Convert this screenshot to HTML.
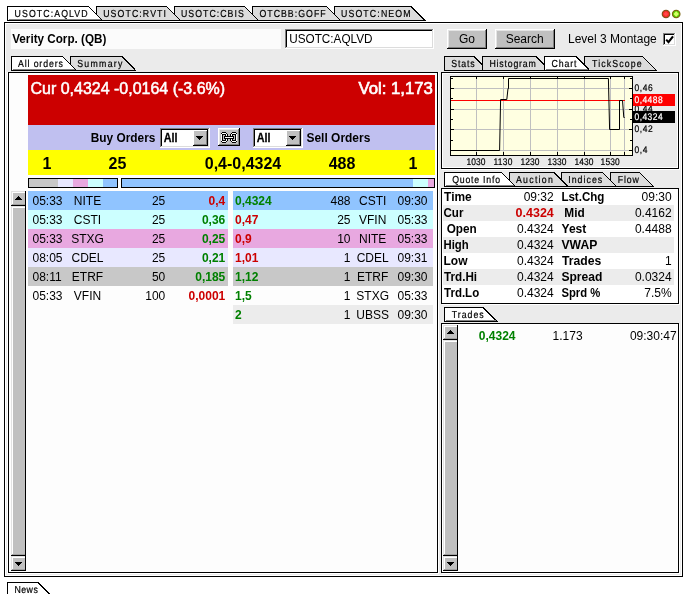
<!DOCTYPE html>
<html lang="en"><head><meta charset="utf-8"><title>Level 3 Montage - USOTC:AQLVD</title>
<style>html,body{margin:0;padding:0;background:#fff}body{width:690px;height:594px;overflow:hidden}svg{display:block;will-change:transform;font-family:"Liberation Sans",Arial,sans-serif}.c{shape-rendering:crispEdges}</style></head><body>
<svg width="690" height="594" viewBox="0 0 690 594">
<g class="c">
<rect x="0" y="0" width="690" height="594" fill="#fff"/>
<rect x="4" y="22" width="679" height="555" fill="#000"/>
<rect x="5" y="23" width="677" height="553" fill="#fff"/>
<rect x="6" y="24" width="675" height="551" fill="#ebebeb"/>
</g><g class="c" id="toptabs">
<polygon points="334.5,20.5 334.5,6.5 411.1,6.5 425.0,20.5" fill="#dcdcdc" stroke="#000" stroke-width="1"/>
<text transform="translate(341,17) scale(0.86,1)" font-size="10.2" text-rendering="geometricPrecision" textLength="80.9" lengthAdjust="spacing" stroke="#000" stroke-width="0.2">USOTC:NEOM</text>
<polygon points="252.5,20.5 252.5,6.5 326.7,6.5 340.6,20.5" fill="#dcdcdc" stroke="#000" stroke-width="1"/>
<text transform="translate(259.4,17) scale(0.86,1)" font-size="10.2" text-rendering="geometricPrecision" textLength="77.1" lengthAdjust="spacing" stroke="#000" stroke-width="0.2">OTCBB:GOFF</text>
<polygon points="174.5,20.5 174.5,6.5 244.4,6.5 258.3,20.5" fill="#dcdcdc" stroke="#000" stroke-width="1"/>
<text transform="translate(181,17) scale(0.86,1)" font-size="10.2" text-rendering="geometricPrecision" textLength="73.0" lengthAdjust="spacing" stroke="#000" stroke-width="0.2">USOTC:CBIS</text>
<polygon points="96.5,20.5 96.5,6.5 166.4,6.5 180.3,20.5" fill="#dcdcdc" stroke="#000" stroke-width="1"/>
<text transform="translate(103.2,17) scale(0.86,1)" font-size="10.2" text-rendering="geometricPrecision" textLength="73.0" lengthAdjust="spacing" stroke="#000" stroke-width="0.2">USOTC:RVTI</text>
<polygon points="7.5,20.5 7.5,6.5 88.4,6.5 102.3,20.5" fill="#fff" stroke="#000" stroke-width="1"/>
<rect x="9" y="19" width="91.8" height="1" fill="#808080"/>
<text transform="translate(14.6,17) scale(0.86,1)" font-size="10.2" text-rendering="geometricPrecision" textLength="84.9" lengthAdjust="spacing" stroke="#000" stroke-width="0.2">USOTC:AQLVD</text>
</g><g class="c">
</g><g>
<circle cx="666" cy="14" r="3.7" fill="#ff2828" stroke="#86501a" stroke-width="1.3"/>
<rect x="664.2" y="12.2" width="3.4" height="3.4" fill="#ff4a4a" transform="rotate(45 665.9 13.9)"/>
<circle cx="676.2" cy="14" r="3.7" fill="#56dc00" stroke="#7c6612" stroke-width="1.3"/>
<rect x="674.3" y="12.1" width="3.8" height="3.8" fill="#d6ff66" transform="rotate(45 676.2 14)"/>
</g><g class="c">
<rect x="11" y="29" width="270" height="20" fill="#fbfbfb"/>
<text x="12.2" y="43" font-size="12" font-weight="bold" textLength="94.2" lengthAdjust="spacingAndGlyphs">Verity Corp. (QB)</text>
<rect x="285" y="29" width="149" height="20" fill="#fff"/>
<rect x="285" y="29" width="148" height="1" fill="#808080"/>
<rect x="285" y="29" width="1" height="19" fill="#808080"/>
<rect x="286" y="30" width="146" height="1" fill="#000"/>
<rect x="286" y="30" width="1" height="17" fill="#000"/>
<rect x="286" y="47" width="147" height="1" fill="#dcdcdc"/>
<rect x="432" y="30" width="1" height="18" fill="#dcdcdc"/>
<rect x="285" y="48" width="149" height="1" fill="#fff"/>
<rect x="433" y="29" width="1" height="20" fill="#fff"/>
<text x="289.2" y="43" font-size="12" textLength="83.3" lengthAdjust="spacingAndGlyphs">USOTC:AQLVD</text>
<rect x="447" y="29" width="40" height="20" fill="#c0c0c0"/>
<rect x="447" y="29" width="39" height="2" fill="#e4e4e4"/>
<rect x="447" y="29" width="2" height="19" fill="#e4e4e4"/>
<rect x="447" y="29" width="39" height="1" fill="#fff"/>
<rect x="447" y="29" width="1" height="19" fill="#fff"/>
<rect x="448" y="47" width="38" height="1" fill="#808080"/>
<rect x="485" y="30" width="1" height="18" fill="#808080"/>
<rect x="447" y="48" width="40" height="1" fill="#000"/>
<rect x="486" y="29" width="1" height="20" fill="#000"/>
<text x="467" y="43" font-size="12" text-anchor="middle">Go</text>
<rect x="495" y="29" width="60" height="20" fill="#c0c0c0"/>
<rect x="495" y="29" width="59" height="2" fill="#e4e4e4"/>
<rect x="495" y="29" width="2" height="19" fill="#e4e4e4"/>
<rect x="495" y="29" width="59" height="1" fill="#fff"/>
<rect x="495" y="29" width="1" height="19" fill="#fff"/>
<rect x="496" y="47" width="58" height="1" fill="#808080"/>
<rect x="553" y="30" width="1" height="18" fill="#808080"/>
<rect x="495" y="48" width="60" height="1" fill="#000"/>
<rect x="554" y="29" width="1" height="20" fill="#000"/>
<text x="524.7" y="43" font-size="12" text-anchor="middle">Search</text>
<text x="568" y="43" font-size="12">Level 3 Montage</text>
<rect x="663" y="33" width="13" height="13" fill="#fff"/>
<rect x="663" y="33" width="12" height="1" fill="#808080"/>
<rect x="663" y="33" width="1" height="12" fill="#808080"/>
<rect x="664" y="34" width="10" height="1" fill="#000"/>
<rect x="664" y="34" width="1" height="10" fill="#000"/>
<rect x="664" y="44" width="11" height="1" fill="#dcdcdc"/>
<rect x="674" y="34" width="1" height="11" fill="#dcdcdc"/>
<rect x="663" y="45" width="13" height="1" fill="#fff"/>
<rect x="675" y="33" width="1" height="13" fill="#fff"/>
</g><g>
<polyline points="666.2,39.6 668.5,42.2 673,36.3" fill="none" stroke="#000" stroke-width="2.1"/>
</g><g class="c">
<polygon points="70.5,70.5 70.5,56.5 121.9,56.5 135.8,70.5" fill="#dcdcdc" stroke="#000" stroke-width="1"/>
<text transform="translate(77.2,67) scale(0.86,1)" font-size="10.2" text-rendering="geometricPrecision" textLength="52.6" lengthAdjust="spacing" stroke="#000" stroke-width="0.2">Summary</text>
<polygon points="11.5,70.5 11.5,56.5 62.7,56.5 76.6,70.5" fill="#fff" stroke="#000" stroke-width="1"/>
<rect x="13" y="69" width="62.099999999999994" height="1" fill="#808080"/>
<text transform="translate(18,67) scale(0.86,1)" font-size="10.2" text-rendering="geometricPrecision" textLength="52.1" lengthAdjust="spacing" stroke="#000" stroke-width="0.2">All orders</text>
<rect x="7" y="72" width="432" height="502" fill="#fff"/>
<rect x="8" y="72" width="430" height="501" fill="#000"/>
<rect x="9" y="73" width="428" height="499" fill="#fdfdfd"/>
<rect x="28" y="75" width="407" height="50" fill="#cc0000"/>
<text transform="translate(30.5,93.8) scale(1,1.05)" font-size="16" fill="#fff" stroke="#fff" stroke-width="0.5">Cur 0,4324 -0,0164 (-3.6%)</text>
<text transform="translate(358.4,93.8) scale(1,1.05)" font-size="16" fill="#fff" stroke="#fff" stroke-width="0.65" textLength="74.4" lengthAdjust="spacingAndGlyphs">Vol: 1,173</text>
<rect x="28" y="125" width="407" height="25" fill="#c0c0f0"/>
<text x="90.8" y="141.7" font-size="12" font-weight="bold" textLength="64.6" lengthAdjust="spacingAndGlyphs">Buy Orders</text>
<text x="306.5" y="141.7" font-size="12" font-weight="bold" textLength="63.8" lengthAdjust="spacingAndGlyphs">Sell Orders</text>
<rect x="160" y="128" width="50" height="20" fill="#fff"/>
<rect x="160" y="128" width="49" height="1" fill="#808080"/>
<rect x="160" y="128" width="1" height="19" fill="#808080"/>
<rect x="161" y="129" width="47" height="1" fill="#000"/>
<rect x="161" y="129" width="1" height="17" fill="#000"/>
<rect x="161" y="146" width="48" height="1" fill="#dcdcdc"/>
<rect x="208" y="129" width="1" height="18" fill="#dcdcdc"/>
<rect x="160" y="147" width="50" height="1" fill="#fff"/>
<rect x="209" y="128" width="1" height="20" fill="#fff"/>
<text x="163.7" y="141.7" font-size="12" font-weight="bold" textLength="13.8" lengthAdjust="spacingAndGlyphs" stroke="#000" stroke-width="0.3">All</text>
<rect x="193" y="130" width="15" height="16" fill="#c0c0c0"/>
<rect x="193" y="130" width="14" height="1" fill="#fff"/>
<rect x="193" y="130" width="1" height="15" fill="#fff"/>
<rect x="194" y="144" width="13" height="1" fill="#808080"/>
<rect x="206" y="131" width="1" height="14" fill="#808080"/>
<rect x="193" y="145" width="15" height="1" fill="#000"/>
<rect x="207" y="130" width="1" height="16" fill="#000"/>
<rect x="196" y="136" width="7" height="1" fill="#000"/>
<rect x="197" y="137" width="5" height="1" fill="#000"/>
<rect x="198" y="138" width="3" height="1" fill="#000"/>
<rect x="199" y="139" width="1" height="1" fill="#000"/>
<rect x="253" y="128" width="50" height="20" fill="#fff"/>
<rect x="253" y="128" width="49" height="1" fill="#808080"/>
<rect x="253" y="128" width="1" height="19" fill="#808080"/>
<rect x="254" y="129" width="47" height="1" fill="#000"/>
<rect x="254" y="129" width="1" height="17" fill="#000"/>
<rect x="254" y="146" width="48" height="1" fill="#dcdcdc"/>
<rect x="301" y="129" width="1" height="18" fill="#dcdcdc"/>
<rect x="253" y="147" width="50" height="1" fill="#fff"/>
<rect x="302" y="128" width="1" height="20" fill="#fff"/>
<text x="256.7" y="141.7" font-size="12" font-weight="bold" textLength="13.8" lengthAdjust="spacingAndGlyphs" stroke="#000" stroke-width="0.3">All</text>
<rect x="286" y="130" width="15" height="16" fill="#c0c0c0"/>
<rect x="286" y="130" width="14" height="1" fill="#fff"/>
<rect x="286" y="130" width="1" height="15" fill="#fff"/>
<rect x="287" y="144" width="13" height="1" fill="#808080"/>
<rect x="299" y="131" width="1" height="14" fill="#808080"/>
<rect x="286" y="145" width="15" height="1" fill="#000"/>
<rect x="300" y="130" width="1" height="16" fill="#000"/>
<rect x="289" y="136" width="7" height="1" fill="#000"/>
<rect x="290" y="137" width="5" height="1" fill="#000"/>
<rect x="291" y="138" width="3" height="1" fill="#000"/>
<rect x="292" y="139" width="1" height="1" fill="#000"/>
<rect x="218" y="128" width="22" height="18" fill="#c0c0c0"/>
<rect x="218" y="128" width="21" height="2" fill="#e4e4e4"/>
<rect x="218" y="128" width="2" height="17" fill="#e4e4e4"/>
<rect x="218" y="128" width="21" height="1" fill="#fff"/>
<rect x="218" y="128" width="1" height="17" fill="#fff"/>
<rect x="219" y="144" width="20" height="1" fill="#808080"/>
<rect x="238" y="129" width="1" height="16" fill="#808080"/>
<rect x="218" y="145" width="22" height="1" fill="#000"/>
<rect x="239" y="128" width="1" height="18" fill="#000"/>
<g id="chain">
<rect x="222" y="132" width="4" height="1" fill="#000"/>
<rect x="232" y="132" width="4" height="1" fill="#000"/>
<rect x="221" y="133" width="1" height="1" fill="#000"/>
<rect x="222" y="133" width="4" height="1" fill="#fff"/>
<rect x="226" y="133" width="1" height="1" fill="#000"/>
<rect x="231" y="133" width="1" height="1" fill="#000"/>
<rect x="232" y="133" width="4" height="1" fill="#fff"/>
<rect x="236" y="133" width="1" height="1" fill="#000"/>
<rect x="221" y="134" width="1" height="1" fill="#fff"/>
<rect x="222" y="134" width="4" height="1" fill="#000"/>
<rect x="226" y="134" width="1" height="1" fill="#fff"/>
<rect x="227" y="134" width="1" height="1" fill="#000"/>
<rect x="230" y="134" width="1" height="1" fill="#000"/>
<rect x="231" y="134" width="1" height="1" fill="#fff"/>
<rect x="232" y="134" width="4" height="1" fill="#000"/>
<rect x="236" y="134" width="1" height="1" fill="#fff"/>
<rect x="221" y="135" width="1" height="1" fill="#fff"/>
<rect x="222" y="135" width="1" height="1" fill="#000"/>
<rect x="225" y="135" width="1" height="1" fill="#000"/>
<rect x="226" y="135" width="1" height="1" fill="#fff"/>
<rect x="227" y="135" width="1" height="1" fill="#000"/>
<rect x="230" y="135" width="1" height="1" fill="#000"/>
<rect x="231" y="135" width="1" height="1" fill="#fff"/>
<rect x="232" y="135" width="1" height="1" fill="#000"/>
<rect x="235" y="135" width="1" height="1" fill="#000"/>
<rect x="236" y="135" width="1" height="1" fill="#fff"/>
<rect x="221" y="136" width="1" height="1" fill="#fff"/>
<rect x="222" y="136" width="1" height="1" fill="#000"/>
<rect x="224" y="136" width="10" height="1" fill="#000"/>
<rect x="235" y="136" width="1" height="1" fill="#000"/>
<rect x="236" y="136" width="1" height="1" fill="#fff"/>
<rect x="221" y="137" width="1" height="1" fill="#fff"/>
<rect x="222" y="137" width="1" height="1" fill="#000"/>
<rect x="224" y="137" width="1" height="1" fill="#000"/>
<rect x="225" y="137" width="8" height="1" fill="#fff"/>
<rect x="233" y="137" width="1" height="1" fill="#000"/>
<rect x="235" y="137" width="1" height="1" fill="#000"/>
<rect x="236" y="137" width="1" height="1" fill="#fff"/>
<rect x="221" y="138" width="1" height="1" fill="#fff"/>
<rect x="222" y="138" width="1" height="1" fill="#000"/>
<rect x="224" y="138" width="10" height="1" fill="#000"/>
<rect x="235" y="138" width="1" height="1" fill="#000"/>
<rect x="236" y="138" width="1" height="1" fill="#fff"/>
<rect x="221" y="139" width="1" height="1" fill="#fff"/>
<rect x="222" y="139" width="1" height="1" fill="#000"/>
<rect x="225" y="139" width="1" height="1" fill="#000"/>
<rect x="226" y="139" width="1" height="1" fill="#fff"/>
<rect x="227" y="139" width="1" height="1" fill="#000"/>
<rect x="230" y="139" width="1" height="1" fill="#000"/>
<rect x="231" y="139" width="1" height="1" fill="#fff"/>
<rect x="232" y="139" width="1" height="1" fill="#000"/>
<rect x="235" y="139" width="1" height="1" fill="#000"/>
<rect x="236" y="139" width="1" height="1" fill="#fff"/>
<rect x="221" y="140" width="1" height="1" fill="#fff"/>
<rect x="222" y="140" width="4" height="1" fill="#000"/>
<rect x="226" y="140" width="1" height="1" fill="#fff"/>
<rect x="227" y="140" width="1" height="1" fill="#000"/>
<rect x="230" y="140" width="1" height="1" fill="#000"/>
<rect x="231" y="140" width="1" height="1" fill="#fff"/>
<rect x="232" y="140" width="4" height="1" fill="#000"/>
<rect x="236" y="140" width="1" height="1" fill="#fff"/>
<rect x="221" y="141" width="1" height="1" fill="#000"/>
<rect x="222" y="141" width="4" height="1" fill="#fff"/>
<rect x="226" y="141" width="1" height="1" fill="#000"/>
<rect x="231" y="141" width="1" height="1" fill="#000"/>
<rect x="232" y="141" width="4" height="1" fill="#fff"/>
<rect x="236" y="141" width="1" height="1" fill="#000"/>
<rect x="222" y="142" width="4" height="1" fill="#000"/>
<rect x="232" y="142" width="4" height="1" fill="#000"/>
</g>
<rect x="28" y="150" width="407" height="25" fill="#ffff00"/>
<text x="47" y="168.6" font-size="16" font-weight="bold" text-anchor="middle">1</text>
<text x="117.5" y="168.6" font-size="16" font-weight="bold" text-anchor="middle">25</text>
<text x="243" y="168.6" font-size="16" font-weight="bold" text-anchor="middle">0,4-0,4324</text>
<text x="342" y="168.6" font-size="16" font-weight="bold" text-anchor="middle">488</text>
<text x="413" y="168.6" font-size="16" font-weight="bold" text-anchor="middle">1</text>
<rect x="28" y="178" width="90" height="10" fill="#000"/>
<rect x="29" y="179" width="29" height="8" fill="#c8c8c8"/>
<rect x="58" y="179" width="15" height="8" fill="#e8e8ff"/>
<rect x="73" y="179" width="15" height="8" fill="#e8a8e0"/>
<rect x="88" y="179" width="15" height="8" fill="#ccffff"/>
<rect x="103" y="179" width="14" height="8" fill="#90c4ff"/>
<rect x="121" y="178" width="314" height="10" fill="#000"/>
<rect x="122" y="179" width="291" height="8" fill="#90c4ff"/>
<rect x="413" y="179" width="15" height="8" fill="#ccffff"/>
<rect x="428" y="179" width="6" height="8" fill="#e8a8e0"/>
<rect x="11" y="191" width="15" height="15" fill="#c0c0c0"/>
<rect x="11" y="191" width="14" height="2" fill="#fff"/>
<rect x="11" y="191" width="2" height="14" fill="#fff"/>
<rect x="11" y="191" width="14" height="1" fill="#e2e2e2"/>
<rect x="11" y="191" width="1" height="14" fill="#e2e2e2"/>
<rect x="12" y="204" width="13" height="1" fill="#a0a0a0"/>
<rect x="25" y="191" width="1" height="15" fill="#000"/>
<rect x="11" y="205" width="15" height="1" fill="#000"/>
<rect x="18" y="196" width="1" height="1" fill="#000"/>
<rect x="17" y="197" width="3" height="1" fill="#000"/>
<rect x="16" y="198" width="5" height="1" fill="#000"/>
<rect x="15" y="199" width="7" height="1" fill="#000"/>
<rect x="11" y="206" width="15" height="350" fill="#c0c0c0"/>
<rect x="11" y="206" width="14" height="2" fill="#fff"/>
<rect x="11" y="206" width="2" height="349" fill="#fff"/>
<rect x="11" y="206" width="14" height="1" fill="#e2e2e2"/>
<rect x="11" y="206" width="1" height="349" fill="#e2e2e2"/>
<rect x="12" y="554" width="13" height="1" fill="#a0a0a0"/>
<rect x="25" y="206" width="1" height="350" fill="#000"/>
<rect x="11" y="555" width="15" height="1" fill="#000"/>
<rect x="11" y="556" width="15" height="15" fill="#c0c0c0"/>
<rect x="11" y="556" width="14" height="2" fill="#fff"/>
<rect x="11" y="556" width="2" height="14" fill="#fff"/>
<rect x="11" y="556" width="14" height="1" fill="#e2e2e2"/>
<rect x="11" y="556" width="1" height="14" fill="#e2e2e2"/>
<rect x="12" y="569" width="13" height="1" fill="#a0a0a0"/>
<rect x="25" y="556" width="1" height="15" fill="#000"/>
<rect x="11" y="570" width="15" height="1" fill="#000"/>
<rect x="15" y="562" width="7" height="1" fill="#000"/>
<rect x="16" y="563" width="5" height="1" fill="#000"/>
<rect x="17" y="564" width="3" height="1" fill="#000"/>
<rect x="18" y="565" width="1" height="1" fill="#000"/>
<rect x="28" y="191" width="200" height="19" fill="#90c4ff"/>
<text x="32.5" y="204.7" font-size="12">05:33</text>
<text x="87.5" y="204.7" font-size="12" text-anchor="middle">NITE</text>
<text x="165.3" y="204.7" font-size="12" text-anchor="end">25</text>
<text x="225.3" y="204.7" font-size="12" font-weight="bold" fill="#cc0000" text-anchor="end">0,4</text>
<rect x="28" y="210" width="200" height="19" fill="#ccffff"/>
<text x="32.5" y="223.7" font-size="12">05:33</text>
<text x="87.5" y="223.7" font-size="12" text-anchor="middle">CSTI</text>
<text x="165.3" y="223.7" font-size="12" text-anchor="end">25</text>
<text x="225.3" y="223.7" font-size="12" font-weight="bold" fill="#008000" text-anchor="end">0,36</text>
<rect x="28" y="229" width="200" height="19" fill="#e8a8e0"/>
<text x="32.5" y="242.7" font-size="12">05:33</text>
<text x="87.5" y="242.7" font-size="12" text-anchor="middle">STXG</text>
<text x="165.3" y="242.7" font-size="12" text-anchor="end">25</text>
<text x="225.3" y="242.7" font-size="12" font-weight="bold" fill="#008000" text-anchor="end">0,25</text>
<rect x="28" y="248" width="200" height="19" fill="#e8e8ff"/>
<text x="32.5" y="261.7" font-size="12">08:05</text>
<text x="87.5" y="261.7" font-size="12" text-anchor="middle">CDEL</text>
<text x="165.3" y="261.7" font-size="12" text-anchor="end">25</text>
<text x="225.3" y="261.7" font-size="12" font-weight="bold" fill="#008000" text-anchor="end">0,21</text>
<rect x="28" y="267" width="200" height="19" fill="#c8c8c8"/>
<text x="32.5" y="280.7" font-size="12">08:11</text>
<text x="87.5" y="280.7" font-size="12" text-anchor="middle">ETRF</text>
<text x="165.3" y="280.7" font-size="12" text-anchor="end">50</text>
<text x="225.3" y="280.7" font-size="12" font-weight="bold" fill="#008000" text-anchor="end">0,185</text>
<rect x="28" y="286" width="200" height="19" fill="#fdfdfd"/>
<text x="32.5" y="299.7" font-size="12">05:33</text>
<text x="87.5" y="299.7" font-size="12" text-anchor="middle">VFIN</text>
<text x="165.3" y="299.7" font-size="12" text-anchor="end">100</text>
<text x="225.3" y="299.7" font-size="12" font-weight="bold" fill="#cc0000" text-anchor="end">0,0001</text>
<rect x="233" y="191" width="200" height="19" fill="#90c4ff"/>
<text x="235" y="204.7" font-size="12" font-weight="bold" fill="#008000">0,4324</text>
<text x="350.5" y="204.7" font-size="12" text-anchor="end">488</text>
<text x="372.7" y="204.7" font-size="12" text-anchor="middle">CSTI</text>
<text x="397.5" y="204.7" font-size="12">09:30</text>
<rect x="233" y="210" width="200" height="19" fill="#ccffff"/>
<text x="235" y="223.7" font-size="12" font-weight="bold" fill="#cc0000">0,47</text>
<text x="350.5" y="223.7" font-size="12" text-anchor="end">25</text>
<text x="372.7" y="223.7" font-size="12" text-anchor="middle">VFIN</text>
<text x="397.5" y="223.7" font-size="12">05:33</text>
<rect x="233" y="229" width="200" height="19" fill="#e8a8e0"/>
<text x="235" y="242.7" font-size="12" font-weight="bold" fill="#cc0000">0,9</text>
<text x="350.5" y="242.7" font-size="12" text-anchor="end">10</text>
<text x="372.7" y="242.7" font-size="12" text-anchor="middle">NITE</text>
<text x="397.5" y="242.7" font-size="12">05:33</text>
<rect x="233" y="248" width="200" height="19" fill="#e8e8ff"/>
<text x="235" y="261.7" font-size="12" font-weight="bold" fill="#cc0000">1,01</text>
<text x="350.5" y="261.7" font-size="12" text-anchor="end">1</text>
<text x="372.7" y="261.7" font-size="12" text-anchor="middle">CDEL</text>
<text x="397.5" y="261.7" font-size="12">09:31</text>
<rect x="233" y="267" width="200" height="19" fill="#c8c8c8"/>
<text x="235" y="280.7" font-size="12" font-weight="bold" fill="#008000">1,12</text>
<text x="350.5" y="280.7" font-size="12" text-anchor="end">1</text>
<text x="372.7" y="280.7" font-size="12" text-anchor="middle">ETRF</text>
<text x="397.5" y="280.7" font-size="12">09:30</text>
<rect x="233" y="286" width="200" height="19" fill="#fdfdfd"/>
<text x="235" y="299.7" font-size="12" font-weight="bold" fill="#008000">1,5</text>
<text x="350.5" y="299.7" font-size="12" text-anchor="end">1</text>
<text x="372.7" y="299.7" font-size="12" text-anchor="middle">STXG</text>
<text x="397.5" y="299.7" font-size="12">05:33</text>
<rect x="233" y="305" width="200" height="19" fill="#ececec"/>
<text x="235" y="318.7" font-size="12" font-weight="bold" fill="#008000">2</text>
<text x="350.5" y="318.7" font-size="12" text-anchor="end">1</text>
<text x="372.7" y="318.7" font-size="12" text-anchor="middle">UBSS</text>
<text x="397.5" y="318.7" font-size="12">09:30</text>
<polygon points="444.5,70.5 444.5,56.5 474.2,56.5 488.1,70.5" fill="#dcdcdc" stroke="#000" stroke-width="1"/>
<text transform="translate(451.3,67) scale(0.86,1)" font-size="10.2" text-rendering="geometricPrecision" textLength="27.2" lengthAdjust="spacing" stroke="#000" stroke-width="0.2">Stats</text>
<polygon points="482.5,70.5 482.5,56.5 536.1,56.5 550.0,70.5" fill="#dcdcdc" stroke="#000" stroke-width="1"/>
<text transform="translate(489.4,67) scale(0.86,1)" font-size="10.2" text-rendering="geometricPrecision" textLength="54.0" lengthAdjust="spacing" stroke="#000" stroke-width="0.2">Histogram</text>
<polygon points="584.5,70.5 584.5,56.5 642.4,56.5 656.3,70.5" fill="#dcdcdc" stroke="#000" stroke-width="1"/>
<text transform="translate(592,67) scale(0.86,1)" font-size="10.2" text-rendering="geometricPrecision" textLength="57.7" lengthAdjust="spacing" stroke="#000" stroke-width="0.2">TickScope</text>
<polygon points="544.5,70.5 544.5,56.5 575.9,56.5 589.8,70.5" fill="#fff" stroke="#000" stroke-width="1"/>
<rect x="546" y="69" width="42.299999999999955" height="1" fill="#808080"/>
<text transform="translate(551.5,67) scale(0.86,1)" font-size="10.2" text-rendering="geometricPrecision" textLength="29.1" lengthAdjust="spacing" stroke="#000" stroke-width="0.2">Chart</text>
<rect x="442" y="73" width="238" height="97" fill="#fff"/>
<rect x="441" y="72" width="238" height="97" fill="#000"/>
<rect x="442" y="73" width="236" height="95" fill="#fff"/>
<rect x="443" y="74" width="234" height="93" fill="#ebebeb"/>
<rect x="450" y="76" width="183" height="80" fill="#000"/>
<rect x="451" y="77" width="181" height="78" fill="#ffffe1"/>
<rect x="476" y="77" width="1" height="78" fill="#c0c0c0"/>
<rect x="503" y="77" width="1" height="78" fill="#c0c0c0"/>
<rect x="530" y="77" width="1" height="78" fill="#c0c0c0"/>
<rect x="557" y="77" width="1" height="78" fill="#c0c0c0"/>
<rect x="584" y="77" width="1" height="78" fill="#c0c0c0"/>
<rect x="610" y="77" width="1" height="78" fill="#c0c0c0"/>
<rect x="624" y="77" width="1" height="78" fill="#c0c0c0"/>
<rect x="451" y="88" width="181" height="1" fill="#c0c0c0"/>
<rect x="451" y="109" width="181" height="1" fill="#c0c0c0"/>
<rect x="451" y="129" width="181" height="1" fill="#c0c0c0"/>
<rect x="451" y="150" width="181" height="1" fill="#c0c0c0"/>
<rect x="451" y="88" width="3" height="1" fill="#000"/>
<rect x="629" y="88" width="3" height="1" fill="#000"/>
<rect x="451" y="109" width="3" height="1" fill="#000"/>
<rect x="629" y="109" width="3" height="1" fill="#000"/>
<rect x="451" y="129" width="3" height="1" fill="#000"/>
<rect x="629" y="129" width="3" height="1" fill="#000"/>
<rect x="451" y="150" width="3" height="1" fill="#000"/>
<rect x="629" y="150" width="3" height="1" fill="#000"/>
<rect x="451" y="78" width="2" height="1" fill="#000"/>
<rect x="630" y="78" width="2" height="1" fill="#000"/>
<rect x="451" y="98" width="2" height="1" fill="#000"/>
<rect x="630" y="98" width="2" height="1" fill="#000"/>
<rect x="451" y="119" width="2" height="1" fill="#000"/>
<rect x="630" y="119" width="2" height="1" fill="#000"/>
<rect x="451" y="140" width="2" height="1" fill="#000"/>
<rect x="630" y="140" width="2" height="1" fill="#000"/>
<rect x="476" y="152" width="1" height="3" fill="#000"/>
<rect x="476" y="77" width="1" height="2" fill="#000"/>
<rect x="503" y="152" width="1" height="3" fill="#000"/>
<rect x="503" y="77" width="1" height="2" fill="#000"/>
<rect x="530" y="152" width="1" height="3" fill="#000"/>
<rect x="530" y="77" width="1" height="2" fill="#000"/>
<rect x="557" y="152" width="1" height="3" fill="#000"/>
<rect x="557" y="77" width="1" height="2" fill="#000"/>
<rect x="584" y="152" width="1" height="3" fill="#000"/>
<rect x="584" y="77" width="1" height="2" fill="#000"/>
<rect x="610" y="152" width="1" height="3" fill="#000"/>
<rect x="610" y="77" width="1" height="2" fill="#000"/>
<rect x="624" y="152" width="1" height="3" fill="#000"/>
<rect x="624" y="77" width="1" height="2" fill="#000"/>
</g><g>
<line x1="451" y1="100.5" x2="625" y2="100.5" stroke="#ff0000" stroke-width="1.2"/>
<polyline fill="none" stroke="#000" stroke-width="1" points="450.5,150.5 499.6,150.5 500.6,99.5 506.8,99.5 508,88.5 508.5,88.5 508.5,78.5 608.4,78.5 609.6,129.5 619.5,129.5 619.5,100.5 622.5,100.5 623.8,117.5 624.6,117.5"/>
</g><g class="c">
<text transform="translate(466.40000000000003,165) scale(0.88,1)" font-size="9.6" text-rendering="geometricPrecision" textLength="21.7" lengthAdjust="spacing" stroke="#000" stroke-width="0.2">1030</text>
<text transform="translate(493.40000000000003,165) scale(0.88,1)" font-size="9.6" text-rendering="geometricPrecision" textLength="21.7" lengthAdjust="spacing" stroke="#000" stroke-width="0.2">1130</text>
<text transform="translate(520.4,165) scale(0.88,1)" font-size="9.6" text-rendering="geometricPrecision" textLength="21.7" lengthAdjust="spacing" stroke="#000" stroke-width="0.2">1230</text>
<text transform="translate(547.4,165) scale(0.88,1)" font-size="9.6" text-rendering="geometricPrecision" textLength="21.7" lengthAdjust="spacing" stroke="#000" stroke-width="0.2">1330</text>
<text transform="translate(574.4,165) scale(0.88,1)" font-size="9.6" text-rendering="geometricPrecision" textLength="21.7" lengthAdjust="spacing" stroke="#000" stroke-width="0.2">1430</text>
<text transform="translate(600.6,165) scale(0.88,1)" font-size="9.6" text-rendering="geometricPrecision" textLength="21.7" lengthAdjust="spacing" stroke="#000" stroke-width="0.2">1530</text>
<text transform="translate(634.6,90.8) scale(0.88,1)" font-size="9.6" text-rendering="geometricPrecision" textLength="20.5" lengthAdjust="spacing" stroke="#000" stroke-width="0.2">0,46</text>
<text transform="translate(634.6,111.5) scale(0.88,1)" font-size="9.6" text-rendering="geometricPrecision" textLength="20.5" lengthAdjust="spacing" stroke="#000" stroke-width="0.2">0,44</text>
<text transform="translate(634.6,132) scale(0.88,1)" font-size="9.6" text-rendering="geometricPrecision" textLength="20.5" lengthAdjust="spacing" stroke="#000" stroke-width="0.2">0,42</text>
<text transform="translate(634.6,152.8) scale(0.88,1)" font-size="9.6" text-rendering="geometricPrecision" textLength="14.5" lengthAdjust="spacing" stroke="#000" stroke-width="0.2">0,4</text>
<rect x="633" y="94" width="42" height="12" fill="#ff0000"/>
<text transform="translate(634.6,102.9) scale(0.88,1)" font-size="9.6" text-rendering="geometricPrecision" textLength="31.8" lengthAdjust="spacing" stroke="#fff" stroke-width="0.2" fill="#fff">0,4488</text>
<rect x="633" y="111" width="42" height="12" fill="#000"/>
<text transform="translate(634.6,120.1) scale(0.88,1)" font-size="9.6" text-rendering="geometricPrecision" textLength="31.8" lengthAdjust="spacing" stroke="#fff" stroke-width="0.2" fill="#fff">0,4324</text>
<polygon points="610.5,186.5 610.5,172.5 639.8,172.5 653.6999999999999,186.5" fill="#dcdcdc" stroke="#000" stroke-width="1"/>
<text transform="translate(617.8,183) scale(0.86,1)" font-size="10.2" text-rendering="geometricPrecision" textLength="24.5" lengthAdjust="spacing" stroke="#000" stroke-width="0.2">Flow</text>
<polygon points="561.5,186.5 561.5,172.5 602.8,172.5 616.6999999999999,186.5" fill="#dcdcdc" stroke="#000" stroke-width="1"/>
<text transform="translate(568.2,183) scale(0.86,1)" font-size="10.2" text-rendering="geometricPrecision" textLength="39.5" lengthAdjust="spacing" stroke="#000" stroke-width="0.2">Indices</text>
<polygon points="509.5,186.5 509.5,172.5 554.0,172.5 567.9,186.5" fill="#dcdcdc" stroke="#000" stroke-width="1"/>
<text transform="translate(516,183) scale(0.86,1)" font-size="10.2" text-rendering="geometricPrecision" textLength="42.8" lengthAdjust="spacing" stroke="#000" stroke-width="0.2">Auction</text>
<polygon points="444.5,186.5 444.5,172.5 501.4,172.5 515.3,186.5" fill="#fff" stroke="#000" stroke-width="1"/>
<rect x="446" y="185" width="67.79999999999995" height="1" fill="#808080"/>
<text transform="translate(452.2,183) scale(0.86,1)" font-size="10.2" text-rendering="geometricPrecision" textLength="55.6" lengthAdjust="spacing" stroke="#000" stroke-width="0.2">Quote Info</text>
<rect x="442" y="189" width="238" height="116" fill="#fff"/>
<rect x="441" y="188" width="238" height="116" fill="#000"/>
<rect x="442" y="189" width="236" height="114" fill="#fff"/>
<rect x="443" y="190" width="234" height="112" fill="#fff"/>
<text x="444.1" y="200.6" font-size="12" font-weight="bold" textLength="27.6" lengthAdjust="spacingAndGlyphs">Time</text>
<text x="553.7" y="200.6" font-size="12" text-anchor="end">09:32</text>
<text x="561.4" y="200.6" font-size="12" font-weight="bold" textLength="43" lengthAdjust="spacingAndGlyphs">Lst.Chg</text>
<text x="671.6" y="200.6" font-size="12" text-anchor="end">09:30</text>
<rect x="443" y="205" width="231" height="16" fill="#ececec"/>
<text x="443.5" y="216.6" font-size="12" font-weight="bold" textLength="19.9" lengthAdjust="spacingAndGlyphs">Cur</text>
<text x="515.6" y="216.6" font-size="12" font-weight="bold" fill="#cc0000" textLength="38.2" lengthAdjust="spacingAndGlyphs">0.4324</text>
<text x="564.3" y="216.6" font-size="12" font-weight="bold" textLength="20.4" lengthAdjust="spacingAndGlyphs">Mid</text>
<text x="671.6" y="216.6" font-size="12" text-anchor="end">0.4162</text>
<text x="446.7" y="232.6" font-size="12" font-weight="bold" textLength="30" lengthAdjust="spacingAndGlyphs">Open</text>
<text x="553.7" y="232.6" font-size="12" text-anchor="end">0.4324</text>
<text x="561.5" y="232.6" font-size="12" font-weight="bold" textLength="24.8" lengthAdjust="spacingAndGlyphs">Yest</text>
<text x="671.6" y="232.6" font-size="12" text-anchor="end">0.4488</text>
<rect x="443" y="237" width="231" height="16" fill="#ececec"/>
<text x="443.5" y="248.6" font-size="12" font-weight="bold" textLength="25.2" lengthAdjust="spacingAndGlyphs">High</text>
<text x="553.7" y="248.6" font-size="12" text-anchor="end">0.4324</text>
<text x="561.5" y="248.6" font-size="12" font-weight="bold" textLength="35.8" lengthAdjust="spacingAndGlyphs">VWAP</text>
<text x="443.5" y="264.6" font-size="12" font-weight="bold" textLength="24" lengthAdjust="spacingAndGlyphs">Low</text>
<text x="553.7" y="264.6" font-size="12" text-anchor="end">0.4324</text>
<text x="562.1" y="264.6" font-size="12" font-weight="bold" textLength="39.2" lengthAdjust="spacingAndGlyphs">Trades</text>
<text x="671.6" y="264.6" font-size="12" text-anchor="end">1</text>
<rect x="443" y="269" width="231" height="16" fill="#ececec"/>
<text x="444" y="280.6" font-size="12" font-weight="bold" textLength="33.1" lengthAdjust="spacingAndGlyphs">Trd.Hi</text>
<text x="553.7" y="280.6" font-size="12" text-anchor="end">0.4324</text>
<text x="561.4" y="280.6" font-size="12" font-weight="bold" textLength="41" lengthAdjust="spacingAndGlyphs">Spread</text>
<text x="671.6" y="280.6" font-size="12" text-anchor="end">0.0324</text>
<text x="444" y="296.6" font-size="12" font-weight="bold" textLength="35.2" lengthAdjust="spacingAndGlyphs">Trd.Lo</text>
<text x="553.7" y="296.6" font-size="12" text-anchor="end">0.4324</text>
<text x="561.4" y="296.6" font-size="12" font-weight="bold" textLength="38.8" lengthAdjust="spacingAndGlyphs">Sprd %</text>
<text x="671.6" y="296.6" font-size="12" text-anchor="end">7.5%</text>
<polygon points="444.5,321.5 444.5,307.5 483.2,307.5 497.1,321.5" fill="#fff" stroke="#000" stroke-width="1"/>
<rect x="446" y="320" width="49.60000000000002" height="1" fill="#808080"/>
<text transform="translate(451.8,318) scale(0.86,1)" font-size="10.2" text-rendering="geometricPrecision" textLength="37.0" lengthAdjust="spacing" stroke="#000" stroke-width="0.2">Trades</text>
<rect x="442" y="324" width="238" height="250" fill="#fff"/>
<rect x="441" y="323" width="238" height="250" fill="#000"/>
<rect x="442" y="324" width="236" height="248" fill="#fff"/>
<rect x="443" y="325" width="234" height="246" fill="#fdfdfd"/>
<rect x="443" y="325" width="15" height="15" fill="#c0c0c0"/>
<rect x="443" y="325" width="14" height="2" fill="#fff"/>
<rect x="443" y="325" width="2" height="14" fill="#fff"/>
<rect x="443" y="325" width="14" height="1" fill="#e2e2e2"/>
<rect x="443" y="325" width="1" height="14" fill="#e2e2e2"/>
<rect x="444" y="338" width="13" height="1" fill="#a0a0a0"/>
<rect x="457" y="325" width="1" height="15" fill="#000"/>
<rect x="443" y="339" width="15" height="1" fill="#000"/>
<rect x="450" y="330" width="1" height="1" fill="#000"/>
<rect x="449" y="331" width="3" height="1" fill="#000"/>
<rect x="448" y="332" width="5" height="1" fill="#000"/>
<rect x="447" y="333" width="7" height="1" fill="#000"/>
<rect x="443" y="340" width="15" height="216" fill="#c0c0c0"/>
<rect x="443" y="340" width="14" height="2" fill="#fff"/>
<rect x="443" y="340" width="2" height="215" fill="#fff"/>
<rect x="443" y="340" width="14" height="1" fill="#e2e2e2"/>
<rect x="443" y="340" width="1" height="215" fill="#e2e2e2"/>
<rect x="444" y="554" width="13" height="1" fill="#a0a0a0"/>
<rect x="457" y="340" width="1" height="216" fill="#000"/>
<rect x="443" y="555" width="15" height="1" fill="#000"/>
<rect x="443" y="556" width="15" height="15" fill="#c0c0c0"/>
<rect x="443" y="556" width="14" height="2" fill="#fff"/>
<rect x="443" y="556" width="2" height="14" fill="#fff"/>
<rect x="443" y="556" width="14" height="1" fill="#e2e2e2"/>
<rect x="443" y="556" width="1" height="14" fill="#e2e2e2"/>
<rect x="444" y="569" width="13" height="1" fill="#a0a0a0"/>
<rect x="457" y="556" width="1" height="15" fill="#000"/>
<rect x="443" y="570" width="15" height="1" fill="#000"/>
<rect x="447" y="562" width="7" height="1" fill="#000"/>
<rect x="448" y="563" width="5" height="1" fill="#000"/>
<rect x="449" y="564" width="3" height="1" fill="#000"/>
<rect x="450" y="565" width="1" height="1" fill="#000"/>
<text x="478.8" y="340" font-size="12" font-weight="bold" fill="#008000">0,4324</text>
<text x="552.6" y="340" font-size="12">1.173</text>
<text x="676.6" y="340" font-size="12" text-anchor="end">09:30:47</text>
<polygon points="7.5,596.5 7.5,582.5 38.1,582.5 52.0,596.5" fill="#fff" stroke="#000" stroke-width="1"/>
<rect x="9" y="595" width="41.5" height="1" fill="#808080"/>
<text transform="translate(14.4,593) scale(0.86,1)" font-size="10.2" text-rendering="geometricPrecision" textLength="27.2" lengthAdjust="spacing" stroke="#000" stroke-width="0.2">News</text>
</g></svg></body></html>
